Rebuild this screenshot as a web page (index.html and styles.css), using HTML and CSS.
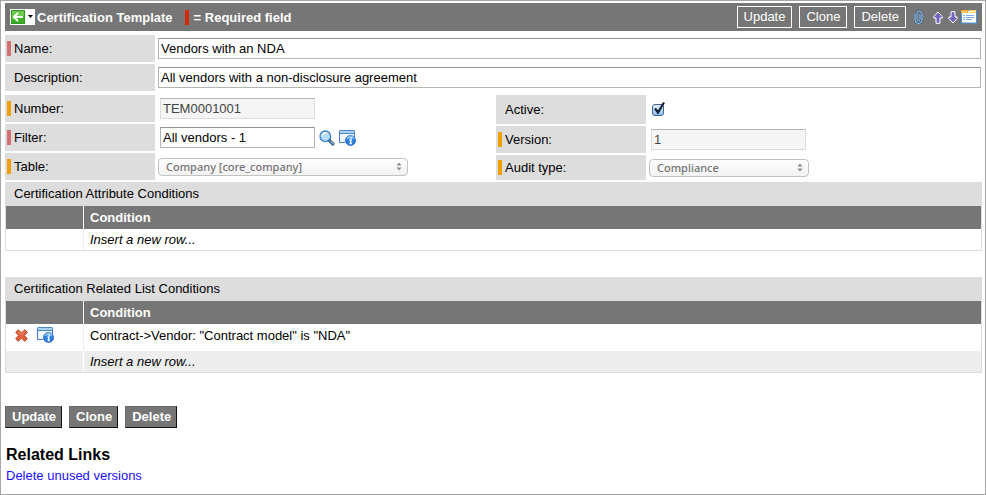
FILE: index.html
```html
<!DOCTYPE html>
<html lang="en">
<head>
<meta charset="utf-8">
<title>Certification Template</title>
<link rel="stylesheet" href="styles.css">
</head>
<body>
<svg class="defs" aria-hidden="true">
  <symbol id="info" viewBox="0 0 17 16">
    <path d="M1 3h14v9H1z" fill="#f1f7fd"/>
    <path d="M0 1.500Q0 0 1.500 0h13Q16 0 16 1.500V4H0z" fill="#4a86c8"/>
    <path d="M1 2h14" stroke="#cfe8fb" stroke-width="1.500"/>
    <path d="M.5 4v8.500H6M15.500 4v3" fill="none" stroke="#3f78d0"/>
    <circle cx="11.500" cy="10.500" r="5" fill="#2d7ee0" stroke="#1c55b4" stroke-width=".8"/>
    <path d="M7.500 9.500a4 4 0 0 1 8 0q-4-2-8 0z" fill="#7bbcf5"/>
    <path d="M12.200 7.200v1.500M10.500 10h1.500l-.7 3.500h1.500" fill="none" stroke="#fff" stroke-width="1.400"/>
  </symbol>
  <symbol id="stepper" viewBox="0 0 6 9">
    <path d="M.5 3.500L3 .5l2.500 3zM.5 5.500L3 8.500l2.500-3z" fill="#8c8c8c"/>
  </symbol>
</svg>
<main class="page">
  <header class="bar">
    <button class="back" type="button" aria-label="Back">
      <svg width="25" height="16" viewBox="0 0 25 16">
        <rect width="25" height="16" fill="#fff"/>
        <rect x="1.500" y="1.500" width="13" height="13" fill="#3cae20" stroke="#2c9a22"/>
        <path d="M2 2h12v5Q8 7 2 11z" fill="#6ecb4c"/>
        <path d="M13 8H4.500M8 4L4 8l4 4" fill="none" stroke="#fff" stroke-width="2"/>
        <path d="M18 6h5L20.500 9z" fill="#000"/>
      </svg>
    </button>
    <h1 class="title">Certification Template</h1>
    <span class="required-mark"></span>
    <span class="legend">= Required field</span>
    <div class="bar-actions">
      <button class="btn" type="button">Update</button>
      <button class="btn" type="button">Clone</button>
      <button class="btn" type="button">Delete</button>
    </div>
    <div class="bar-icons">
      <button class="icon clip" type="button" aria-label="Attachments">
        <svg width="9" height="14" viewBox="0 0 9 14">
          <path d="M1 3.500v6.500a3.500 3.500 0 0 0 7 0V3.500a2.500 2.500 0 0 0-5 0v6a1.500 1.500 0 0 0 3 0V4" fill="none" stroke="#2c5384" stroke-width="2"/>
          <path d="M1 3.500v6.500a3.500 3.500 0 0 0 7 0V3.500a2.500 2.500 0 0 0-5 0v6a1.500 1.500 0 0 0 3 0V4" fill="none" stroke="#b4d2ee" stroke-width="1"/>
        </svg>
      </button>
      <button class="icon up" type="button" aria-label="Previous record">
        <svg width="10" height="13" viewBox="0 0 10 13"><path d="M5 1L.8 5.500V7h2.200v5.300h4V7h2.200V5.500z" fill="#7265bd" stroke="#fff"/></svg>
      </button>
      <button class="icon down" type="button" aria-label="Next record">
        <svg width="10" height="13" viewBox="0 0 10 13"><path d="M5 12L.8 7.500V6h2.200V.7h4V6h2.200v1.500z" fill="#7265bd" stroke="#fff"/></svg>
      </button>
      <button class="icon" type="button" aria-label="Form view">
        <svg width="16" height="14" viewBox="0 0 16 14">
          <rect x=".5" y=".5" width="15" height="12.500" fill="#fff" stroke="#4a90e2"/>
          <path d="M0 0h7v3H0z" fill="#f6a81c"/>
          <path d="M8 0h7v3H8z" fill="#fbd36b"/>
          <path d="M1 2h5M8 1.500h7" stroke="#fff0b8"/>
          <path d="M2 5.500h2M2 7.500h2M2 9.500h2M5 5.500h8M5 7.500h8M5 9.500h6" stroke="#7badde"/>
        </svg>
      </button>
    </div>
  </header>

  <form class="form">
    <div class="column wide">
      <div class="row">
        <label class="label mandatory" for="name">Name:</label>
        <input class="text full" id="name" type="text" value="Vendors with an NDA">
      </div>
      <div class="row">
        <label class="label" for="description">Description:</label>
        <input class="text full" id="description" type="text" value="All vendors with a non-disclosure agreement">
      </div>
    </div>
    <div class="column">
      <div class="row">
        <label class="label preset" for="number">Number:</label>
        <input class="text short" id="number" type="text" value="TEM0001001" readonly>
      </div>
      <div class="row">
        <label class="label mandatory" for="filter">Filter:</label>
        <input class="text short" id="filter" type="text" value="All vendors - 1">
        <button class="icon search" type="button" aria-label="Look up filter">
          <svg width="16" height="16" viewBox="0 0 16 16">
            <path d="M10 10l5 5" stroke="#2f5478" stroke-width="3.200"/>
            <path d="M11.500 11l3.500 3.500" stroke="#8fb6d6" stroke-width="1.400"/>
            <circle cx="6.300" cy="6.300" r="5.300" fill="#b5dcfb" stroke="#3b7fcb" stroke-width="1.300"/>
            <path d="M2.500 6.500a4 4 0 0 1 6.500-3.300Q4 4 2.500 6.500z" fill="#fff"/>
          </svg>
        </button>
        <button class="icon info" type="button" aria-label="Preview filter"><svg width="17" height="16"><use href="#info"/></svg></button>
      </div>
      <div class="row">
        <label class="label preset" for="table">Table:</label>
        <span class="select wide-select">
          <select id="table" disabled><option>Company [core_company]</option></select>
          <svg class="stepper" width="6" height="9"><use href="#stepper"/></svg>
        </span>
      </div>
    </div>
    <div class="column">
      <div class="row tall">
        <label class="label" for="active">Active:</label>
        <span class="check">
          <input id="active" type="checkbox" checked>
          <svg class="tick" width="14" height="15" viewBox="0 0 14 15"><path d="M3 7.500l3 4L12 1.500" fill="none" stroke="#101c33" stroke-width="2.200"/></svg>
        </span>
      </div>
      <div class="row">
        <label class="label preset" for="version">Version:</label>
        <input class="text short" id="version" type="text" value="1" readonly>
      </div>
      <div class="row low">
        <label class="label preset" for="audit">Audit type:</label>
        <span class="select narrow-select">
          <select id="audit" disabled><option>Compliance</option></select>
          <svg class="stepper" width="6" height="9"><use href="#stepper"/></svg>
        </span>
      </div>
    </div>
  </form>

  <section class="list">
    <h2 class="list-title">Certification Attribute Conditions</h2>
    <table class="grid">
      <thead><tr><th class="tools"></th><th>Condition</th></tr></thead>
      <tbody><tr class="insert"><td></td><td>Insert a new row...</td></tr></tbody>
    </table>
  </section>

  <section class="list">
    <h2 class="list-title">Certification Related List Conditions</h2>
    <table class="grid">
      <thead><tr><th class="tools"></th><th>Condition</th></tr></thead>
      <tbody>
        <tr class="record">
          <td>
            <div class="row-icons">
              <button class="icon" type="button" aria-label="Delete row">
                <svg width="13" height="13" viewBox="0 0 13 13">
                  <path d="M3.300.7L6.500 4 9.700.7l2.600 2.600L9.300 6.500l3 3.200-2.600 2.600-3.200-3.200-3.200 3.200L.7 9.700l3-3.200-3-3.200z" fill="#e2603c" stroke="#b8452a"/>
                  <path d="M3 2.500l3.500 3.200L10 2.500" fill="none" stroke="#f39a76"/>
                </svg>
              </button>
              <button class="icon" type="button" aria-label="Preview row"><svg width="17" height="16"><use href="#info"/></svg></button>
            </div>
          </td>
          <td>Contract-&gt;Vendor: "Contract model" is "NDA"</td>
        </tr>
        <tr class="insert shaded"><td></td><td>Insert a new row...</td></tr>
      </tbody>
    </table>
  </section>

  <div class="actions">
    <button class="btn solid" type="button">Update</button>
    <button class="btn solid" type="button">Clone</button>
    <button class="btn solid" type="button">Delete</button>
  </div>

  <nav class="links">
    <h2>Related Links</h2>
    <a href="#">Delete unused versions</a>
  </nav>
</main>
</body>
</html>
```
FILE: styles.css
```css
* { box-sizing: border-box; }

body {
  margin: 0;
  min-height: 100vh;
  display: flex;
  background: #fff;
  color: #000;
  font: 13px/15px "Liberation Sans", Arial, sans-serif;
}

h1, h2 { margin: 0; font-size: inherit; }
button, input, select { font: inherit; color: inherit; margin: 0; }

.defs { position: absolute; width: 0; height: 0; }

.page {
  flex: 1;
  border: 1px solid #a6a6a6;
  padding: 2px 3px 8px 4px;
}

.bar {
  display: flex;
  align-items: center;
  height: 28px;
  padding: 0 5px;
  background: #767676;
  color: #fff;
  font-weight: bold;
}

.back, .icon {
  display: block;
  padding: 0;
  border: 0;
  background: none;
}

.back svg, .icon svg { display: block; }

.title { margin-left: 2px; }

.required-mark {
  width: 4px;
  height: 15px;
  margin: 0 5px 0 12px;
  background: #d42a00;
}

.bar-actions {
  display: flex;
  gap: 7px;
  margin-left: auto;
}

.btn {
  height: 22px;
  padding: 0 6px;
  border: 1px solid #fff;
  background: #767676;
  color: #fff;
  font-weight: normal;
  line-height: 18px;
}

.solid {
  padding: 0 5px 0 6px;
  border-color: #666 #111 #111 #666;
  font-weight: bold;
}

.bar-icons {
  display: flex;
  align-items: center;
  margin-left: 8px;
}

.up { margin-left: 10px; }
.down { margin: 0 3px 0 5px; }

.form {
  display: grid;
  grid-template-columns: 1fr 1fr;
  gap: 4px 5px;
  padding: 4px 0 2px;
}

.column {
  display: flex;
  flex-direction: column;
  gap: 2px;
}

.wide { grid-column: 1 / -1; }

.row {
  display: flex;
  align-items: center;
  height: 27px;
}

.tall { height: 29px; }
.low { height: 25px; }

.label {
  display: flex;
  align-items: center;
  flex: none;
  align-self: stretch;
  width: 150px;
  padding-left: 9px;
  background: #ddd;
}

.mandatory, .preset { padding-left: 2px; }

.mandatory::before, .preset::before {
  content: "";
  width: 4px;
  height: 15px;
  margin-right: 3px;
}

.mandatory::before { background: #d07070; }
.preset::before { background: #f0a000; }

.text {
  height: 21px;
  padding: 0 2px;
  border: 1px solid #b4b4b4;
  border-top-color: #929292;
  background: #fff;
}

.full {
  flex: 1;
  margin: 0 1px 0 3px;
}

.short {
  width: 155px;
  margin-left: 5px;
}

.text:read-only {
  border-color: #b4b4b4 #ddd #ddd;
  background: #f5f5f5;
  color: #444;
}

.search { margin-left: 4px; }
.info { margin-left: 4px; }

.select {
  position: relative;
  height: 18px;
  margin-left: 3px;
}

.wide-select { width: 250px; }
.narrow-select { width: 160px; }

.select select {
  appearance: none;
  display: block;
  width: 100%;
  height: 18px;
  padding: 0 7px;
  border: 1px solid #c2c2c2;
  border-radius: 4px;
  background: linear-gradient(#fdfdfd, #f2f2f2);
  color: #747474;
  font: 500 11px/16px "Noto Sans", "Open Sans", sans-serif;
  opacity: 1;
}

.stepper {
  position: absolute;
  top: 4px;
  right: 6px;
}

.check {
  position: relative;
  margin-left: 6px;
}

.check input {
  appearance: none;
  display: block;
  width: 12px;
  height: 12px;
  border: 1px solid #46608f;
  border-radius: 3px;
  background: linear-gradient(#e4f1fc, #8dc1f2);
}

.tick {
  position: absolute;
  top: -3px;
  left: 0;
  pointer-events: none;
}

.list { margin-bottom: 26px; }

.list-title {
  height: 24px;
  padding-left: 9px;
  background: #ddd;
  font-weight: normal;
  line-height: 24px;
}

.grid {
  width: 100%;
  table-layout: fixed;
  border: 1px solid #ddd;
  border-top: 0;
  border-spacing: 0;
}

.grid th {
  height: 23px;
  padding: 0 0 0 6px;
  background: #767676;
  color: #fff;
  text-align: left;
}

.grid td {
  height: 21px;
  padding: 0 0 0 6px;
}

.grid .tools { width: 78px; }
.grid th:first-child { border-right: 1px solid #fff; }
.grid td:first-child { border-right: 1px solid #eee; }

.grid .record td { height: 27px; padding-bottom: 5px; }
.insert { font-style: italic; }
.shaded td { background: #ededed; }
.grid .shaded td:first-child { border-color: #fff; }

.row-icons {
  display: flex;
  align-items: center;
  gap: 9px;
  padding-left: 3px;
}

.actions {
  display: flex;
  gap: 7px;
  margin-top: 33px;
}

.links { padding: 17px 1px 0; }

.links h2 {
  margin-bottom: 3px;
  font-size: 16px;
  line-height: 20px;
}

.links a {
  color: #1a0dff;
  text-decoration: none;
}
```
